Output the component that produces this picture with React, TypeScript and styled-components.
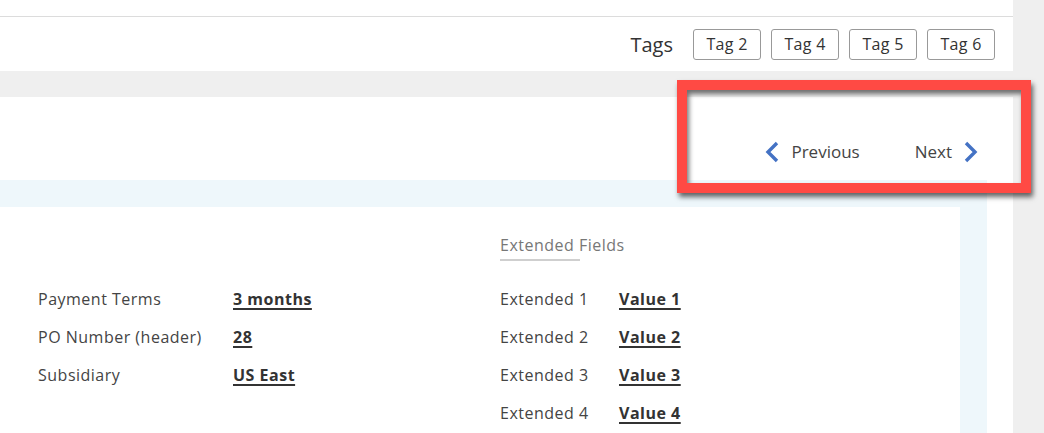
import React from 'react';
import styled, { createGlobalStyle } from 'styled-components';

const GlobalStyle = createGlobalStyle`
  html, body {
    margin: 0;
    padding: 0;
    background: #fff;
  }

  body {
    font-family: 'Open Sans', 'Liberation Sans', sans-serif;
    color: #3a3a3a;
  }
`;

const Page = styled.div`
  position: relative;
  display: flex;
  width: 1044px;
  height: 433px;
  overflow: hidden;
`;

const Main = styled.div`
  display: flex;
  flex-direction: column;
  width: 1013px;
  background: #efefef;
`;

const Scrollbar = styled.div`
  flex: 1;
  background: #efefef;
`;

const TopBar = styled.div`
  height: 16px;
  background: #fff;
  border-bottom: 1px solid #dcdcdc;
`;

const TagsRow = styled.div`
  display: flex;
  justify-content: flex-end;
  align-items: center;
  gap: 10px;

  height: 54px;
  padding-right: 18px;

  background: #fff;
`;

const TagsLabel = styled.span`
  margin-right: 10px;

  font-size: 20px;
  color: #333;
`;

const Tag = styled.span`
  display: flex;
  justify-content: center;
  align-items: center;

  box-sizing: border-box;
  width: 68px;
  height: 31px;

  border: 1px solid #999;
  border-radius: 3px;

  font-size: 16px;
  letter-spacing: 0.3px;
  color: #333;
`;

const Card = styled.div`
  display: flex;
  flex-direction: column;
  flex: 1;
  margin-top: 26px;
  padding-right: 26px;

  background: #fff;
`;

const NavRow = styled.div`
  display: flex;
  justify-content: flex-end;
  align-items: flex-end;
  gap: 55px;

  height: 83px;
  box-sizing: border-box;
  padding: 0 9px 17px 0;
`;

const NavButton = styled.span`
  display: flex;
  align-items: center;
  gap: 12px;

  line-height: 22px;
  font-size: 17px;
  color: #444;
`;

const BlueFrame = styled.div`
  display: flex;
  flex: 1;
  padding: 27px 27px 0 0;

  background: #eef7fb;
`;

const Fields = styled.div`
  flex: 1;
  display: grid;
  grid-template-columns: 195px 267px 119px auto;
  grid-template-rows: 38px;
  grid-auto-rows: 22px;
  row-gap: 16px;
  align-content: start;

  padding: 27px 0 0 38px;

  background: #fff;
  font-size: 16px;
  line-height: 22px;
  letter-spacing: 0.5px;
`;

const SectionTitle = styled.div`
  grid-column: 3 / 5;
  grid-row: 1;
`;

const SectionText = styled.span`
  display: block;
  box-sizing: border-box;
  width: 80px;
  padding-bottom: 3px;

  border-bottom: 2px solid #cfcfcf;
  white-space: nowrap;
  color: #777;
`;

const Label = styled.span`
  white-space: nowrap;
  color: #444;
`;

const Value = styled.a`
  justify-self: start;
  white-space: nowrap;

  font-weight: 700;
  color: #333;
  text-decoration: underline;
  text-underline-offset: 3px;
  text-decoration-thickness: 2px;
`;

const Highlight = styled.div`
  position: absolute;
  left: 677px;
  top: 80px;

  box-sizing: border-box;
  width: 354px;
  height: 113px;

  border: 10px solid #ff4a44;
  box-shadow: 2px 4px 5px rgba(0, 0, 0, 0.6), inset 2px 4px 5px rgba(0, 0, 0, 0.55);
  pointer-events: none;
`;

const Chevron: React.FC<{ $dir: 'left' | 'right' }> = ({ $dir }) => (
  <svg width="14" height="22" viewBox="0 0 14 22">
    <polyline
      points={$dir === 'left' ? '12,2 3,11 12,20' : '2,2 11,11 2,20'}
      fill="none"
      stroke="#4472c4"
      strokeWidth="3.4"
    />
  </svg>
);

const tags = ['Tag 2', 'Tag 4', 'Tag 5', 'Tag 6'];

const left = [
  ['Payment Terms', '3 months'],
  ['PO Number (header)', '28'],
  ['Subsidiary', 'US East'],
];

const extended = [1, 2, 3, 4].map((n) => [`Extended ${n}`, `Value ${n}`]);

export default function App() {
  return (
    <>
      <GlobalStyle />
      <Page>
        <Main>
          <TopBar />
          <TagsRow>
            <TagsLabel>Tags</TagsLabel>
            {tags.map((t) => (
              <Tag key={t}>{t}</Tag>
            ))}
          </TagsRow>
          <Card>
            <NavRow>
              <NavButton>
                <Chevron $dir="left" />
                Previous
              </NavButton>
              <NavButton>
                Next
                <Chevron $dir="right" />
              </NavButton>
            </NavRow>
            <BlueFrame>
              <Fields>
                <SectionTitle>
                  <SectionText>Extended Fields</SectionText>
                </SectionTitle>
                {extended.map(([label, value], i) => (
                  <React.Fragment key={label}>
                    {left[i] ? (
                      <>
                        <Label style={{ gridRow: i + 2, gridColumn: 1 }}>{left[i][0]}</Label>
                        <Value style={{ gridRow: i + 2, gridColumn: 2 }}>{left[i][1]}</Value>
                      </>
                    ) : null}
                    <Label style={{ gridRow: i + 2, gridColumn: 3 }}>{label}</Label>
                    <Value style={{ gridRow: i + 2, gridColumn: 4 }}>{value}</Value>
                  </React.Fragment>
                ))}
              </Fields>
            </BlueFrame>
          </Card>
        </Main>
        <Scrollbar />
        <Highlight />
      </Page>
    </>
  );
}
